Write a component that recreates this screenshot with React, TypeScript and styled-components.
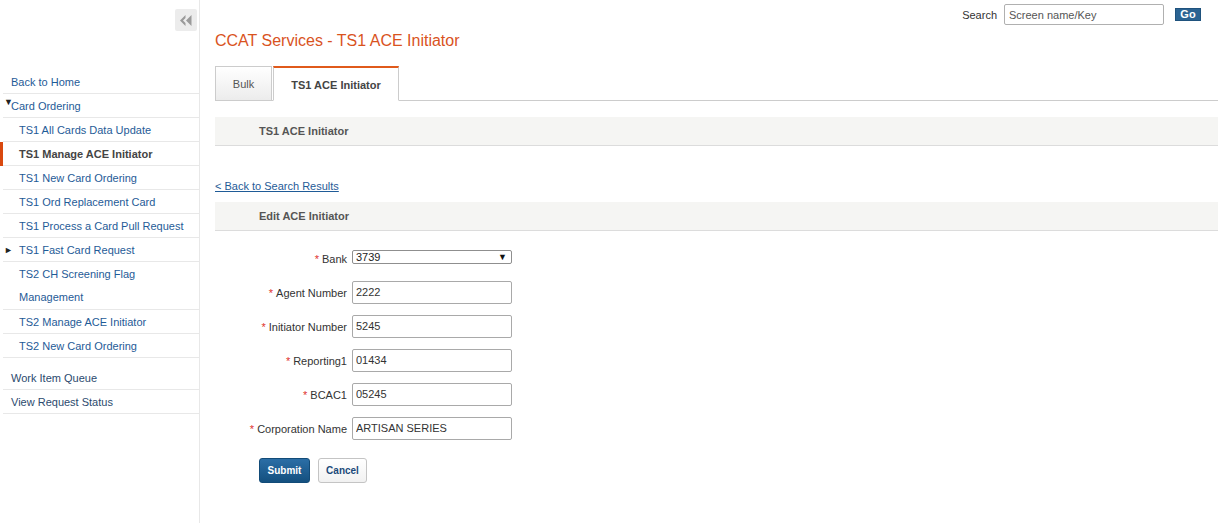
import React from "react";
import styled, { createGlobalStyle } from "styled-components";

const GlobalStyle = createGlobalStyle`
  html, body { margin: 0; padding: 0; background: #fff; }
  body { font-family: "Liberation Sans", Arial, sans-serif; font-size: 11px; color: #333; }
  * { box-sizing: border-box; }
`;

const Page = styled.div`
  display: flex;
  min-height: 523px;
  width: 1218px;
`;

const Sidebar = styled.aside`
  width: 200px;
  flex: 0 0 200px;
  border-right: 1px solid #e8e8e8;
  display: flex;
  flex-direction: column;
`;

const SidebarTop = styled.div`
  height: 70px;
  display: flex;
  justify-content: flex-end;
  align-items: flex-start;
  padding: 9px 2px 0 0;
`;

const CollapseButton = styled.button`
  width: 22px;
  height: 22px;
  border: none;
  border-radius: 2px;
  background: #ececec;
  padding: 0;
  display: flex;
  align-items: center;
  justify-content: center;
  cursor: pointer;
`;

const NavList = styled.ul`
  list-style: none;
  margin: 0;
  padding: 0;
`;

const NavRow = styled.li<{ $pad: number; $active?: boolean; $lines?: number; $dark?: boolean }>`
  position: relative;
  margin-left: 3px;
  display: flex;
  align-items: flex-start;
  padding-left: ${(p) => p.$pad}px;
  padding-top: 1px;
  line-height: ${(p) => (p.$lines && p.$lines > 1 ? "23px" : "22px")};
  border-bottom: 1px solid #e8e8e8;
  font-size: 11px;
  color: ${(p) => (p.$active ? "#444" : p.$dark ? "#2b4a6e" : "#1f5b97")};
  font-weight: ${(p) => (p.$active ? "bold" : "normal")};
  cursor: pointer;
  ${(p) =>
    p.$active
      ? `&::before { content: ""; position: absolute; left: -3px; top: 0; bottom: -1px; width: 3px; background: #d9480f; }`
      : ""}
`;

const Marker = styled.span<{ $w: number; $top?: boolean }>`
  display: inline-block;
  width: ${(p) => p.$w}px;
  flex: 0 0 ${(p) => p.$w}px;
  font-size: 9px;
  line-height: ${(p) => (p.$top ? "14px" : "22px")};
  color: #222;
`;

const Spacer = styled.div`
  height: 8px;
`;

const Main = styled.main`
  flex: 1;
  padding-left: 15px;
  display: flex;
  flex-direction: column;
`;

const TopBar = styled.div`
  height: 31px;
  display: flex;
  justify-content: flex-end;
  align-items: flex-start;
  padding: 4px 17px 0 0;
`;

const SearchLabel = styled.label`
  font-size: 11px;
  color: #333;
  line-height: 22px;
  margin-right: 7px;
`;

const SearchInput = styled.input`
  width: 160px;
  height: 21px;
  border: 1px solid #b0b0b0;
  border-radius: 2px;
  padding: 0 4px;
  font-family: inherit;
  font-size: 11px;
  color: #333;
  &::placeholder { color: #555; }
`;

const GoButton = styled.button`
  margin: 4px 0 0 11px;
  width: 26px;
  height: 13px;
  padding: 0;
  border: 1px solid #1f527d;
  background: #2b6392;
  color: #fff;
  font-family: inherit;
  font-weight: bold;
  font-size: 11px;
  line-height: 11px;
`;

const Title = styled.h1`
  margin: 0;
  font-size: 16px;
  line-height: 20px;
  font-weight: normal;
  color: #d9531e;
`;

const TabBar = styled.div`
  margin-top: 15px;
  display: flex;
  align-items: flex-end;
  gap: 1px;
  height: 35px;
  border-bottom: 1px solid #cccccc;
`;

const Tab = styled.div<{ $active?: boolean; $w: number }>`
  width: ${(p) => p.$w}px;
  height: ${(p) => (p.$active ? "35px" : "34px")};
  margin-bottom: ${(p) => (p.$active ? "-1px" : "0")};
  display: flex;
  align-items: center;
  justify-content: center;
  font-size: 11px;
  border: 1px solid #cccccc;
  border-bottom: ${(p) => (p.$active ? "1px solid #fff" : "none")};
  border-top: ${(p) => (p.$active ? "2px solid #e05a1b" : "1px solid #cccccc")};
  background: ${(p) => (p.$active ? "#fff" : "linear-gradient(#ffffff, #ececec)")};
  color: ${(p) => (p.$active ? "#444" : "#555")};
  font-weight: ${(p) => (p.$active ? "bold" : "normal")};
  padding-top: ${(p) => (p.$active ? "1px" : "0")};
`;

const SectionHeader = styled.div<{ $mt: number }>`
  margin-top: ${(p) => p.$mt}px;
  height: 29px;
  background: #f5f5f3;
  border-bottom: 1px solid #dcdcdc;
  padding-left: 44px;
  display: flex;
  align-items: center;
  font-size: 11px;
  font-weight: bold;
  color: #555;
`;

const BackLink = styled.a`
  margin-top: 33px;
  font-size: 11px;
  line-height: 14px;
  color: #1f5b97;
  text-decoration: underline;
  align-self: flex-start;
  cursor: pointer;
`;

const Form = styled.form`
  padding-top: 10px;
  display: flex;
  flex-direction: column;
`;

const FieldRow = styled.div`
  display: grid;
  grid-template-columns: 132px 160px;
  column-gap: 5px;
  height: 34px;
  align-items: center;
`;

const Label = styled.label`
  text-align: right;
  font-size: 11px;
  color: #333;
  padding-top: 1px;
`;

const Req = styled.span`
  color: #e0332f;
  margin-right: 3px;
`;

const TextInput = styled.input`
  width: 160px;
  height: 23px;
  border: 1px solid #a9a9a9;
  border-radius: 2px;
  padding: 0 3px;
  font-family: inherit;
  font-size: 11px;
  color: #333;
`;

const SelectWrap = styled.div`
  position: relative;
  width: 160px;
  height: 14px;
  margin-bottom: 3px;
`;

const Select = styled.select`
  appearance: none;
  -webkit-appearance: none;
  width: 160px;
  height: 14px;
  border: 1px solid #8f8f8f;
  border-radius: 2px;
  padding: 0 0 0 3px;
  font-family: inherit;
  font-size: 11px;
  line-height: 12px;
  color: #222;
  background: #fff;
`;

const SelectArrow = styled.span`
  position: absolute;
  right: 5px;
  top: 1px;
  font-size: 9px;
  line-height: 12px;
  color: #111;
  pointer-events: none;
`;

const Actions = styled.div`
  margin-top: 13px;
  padding-left: 44px;
  display: flex;
  gap: 8px;
`;

const Button = styled.button<{ $primary?: boolean }>`
  height: 25px;
  padding: 0;
  width: ${(p) => (p.$primary ? "51px" : "49px")};
  border-radius: 3px;
  font-family: inherit;
  font-size: 10px;
  font-weight: bold;
  border: 1px solid ${(p) => (p.$primary ? "#124b78" : "#c4c4c4")};
  background: ${(p) =>
    p.$primary ? "linear-gradient(#2b6ea6, #14507f)" : "linear-gradient(#ffffff, #f1f1f1)"};
  color: ${(p) => (p.$primary ? "#fff" : "#1b4a7a")};
  cursor: pointer;
`;

const ChevronIcon = () => (
  <svg width="12" height="11" viewBox="0 0 12 11">
    <path d="M5.5 0 L0 5.5 L5.5 11 L5.5 8 L3 5.5 L5.5 3 Z" fill="#9a9a9a" />
    <path d="M11.5 0 L6 5.5 L11.5 11 Z" fill="#9a9a9a" />
  </svg>
);

type NavItem = {
  label: React.ReactNode;
  pad: number;
  marker?: { w: number; glyph: string; top?: boolean };
  active?: boolean;
  lines?: number;
  dark?: boolean;
};

const topItems: NavItem[] = [
  { label: "Back to Home", pad: 8 },
  { label: "Card Ordering", pad: 1, marker: { w: 7, glyph: "▼", top: true } },
];

const subItems: NavItem[] = [
  { label: "TS1 All Cards Data Update", pad: 16 },
  { label: "TS1 Manage ACE Initiator", pad: 16, active: true },
  { label: "TS1 New Card Ordering", pad: 16 },
  { label: "TS1 Ord Replacement Card", pad: 16 },
  { label: "TS1 Process a Card Pull Request", pad: 16 },
  { label: "TS1 Fast Card Request", pad: 1, marker: { w: 15, glyph: "►" } },
  {
    label: (
      <span>
        TS2 CH Screening Flag
        <br />
        Management
      </span>
    ),
    pad: 16,
    lines: 2,
  },
  { label: "TS2 Manage ACE Initiator", pad: 16 },
  { label: "TS2 New Card Ordering", pad: 16 },
];

const bottomItems: NavItem[] = [
  { label: "Work Item Queue", pad: 8, dark: true },
  { label: "View Request Status", pad: 8, dark: true },
];

const renderItems = (items: NavItem[]) =>
  items.map((it, i) => (
    <NavRow key={i} $pad={it.pad} $active={it.active} $lines={it.lines} $dark={it.dark}>
      {it.marker && (
        <Marker $w={it.marker.w} $top={it.marker.top}>
          {it.marker.glyph}
        </Marker>
      )}
      {it.label}
    </NavRow>
  ));

const fields = [
  { label: "Agent Number", value: "2222" },
  { label: "Initiator Number", value: "5245" },
  { label: "Reporting1", value: "01434" },
  { label: "BCAC1", value: "05245" },
  { label: "Corporation Name", value: "ARTISAN SERIES" },
];

export default function App() {
  return (
    <>
      <GlobalStyle />
      <Page>
        <Sidebar>
          <SidebarTop>
            <CollapseButton aria-label="Collapse">
              <ChevronIcon />
            </CollapseButton>
          </SidebarTop>
          <NavList>{renderItems(topItems)}</NavList>
          <NavList>{renderItems(subItems)}</NavList>
          <Spacer />
          <NavList>{renderItems(bottomItems)}</NavList>
        </Sidebar>
        <Main>
          <TopBar>
            <SearchLabel>Search</SearchLabel>
            <SearchInput placeholder="Screen name/Key" />
            <GoButton>Go</GoButton>
          </TopBar>
          <Title>CCAT Services - TS1 ACE Initiator</Title>
          <TabBar>
            <Tab $w={57}>Bulk</Tab>
            <Tab $w={126} $active>
              TS1 ACE Initiator
            </Tab>
          </TabBar>
          <SectionHeader $mt={16}>TS1 ACE Initiator</SectionHeader>
          <BackLink>&lt; Back to Search Results</BackLink>
          <SectionHeader $mt={9}>Edit ACE Initiator</SectionHeader>
          <Form onSubmit={(e) => e.preventDefault()}>
            <FieldRow>
              <Label>
                <Req>*</Req>Bank
              </Label>
              <SelectWrap>
                <Select defaultValue="3739">
                  <option value="3739">3739</option>
                </Select>
                <SelectArrow>▼</SelectArrow>
              </SelectWrap>
            </FieldRow>
            {fields.map((f) => (
              <FieldRow key={f.label}>
                <Label>
                  <Req>*</Req>
                  {f.label}
                </Label>
                <TextInput defaultValue={f.value} />
              </FieldRow>
            ))}
            <Actions>
              <Button $primary type="submit">
                Submit
              </Button>
              <Button type="button">Cancel</Button>
            </Actions>
          </Form>
        </Main>
      </Page>
    </>
  );
}
